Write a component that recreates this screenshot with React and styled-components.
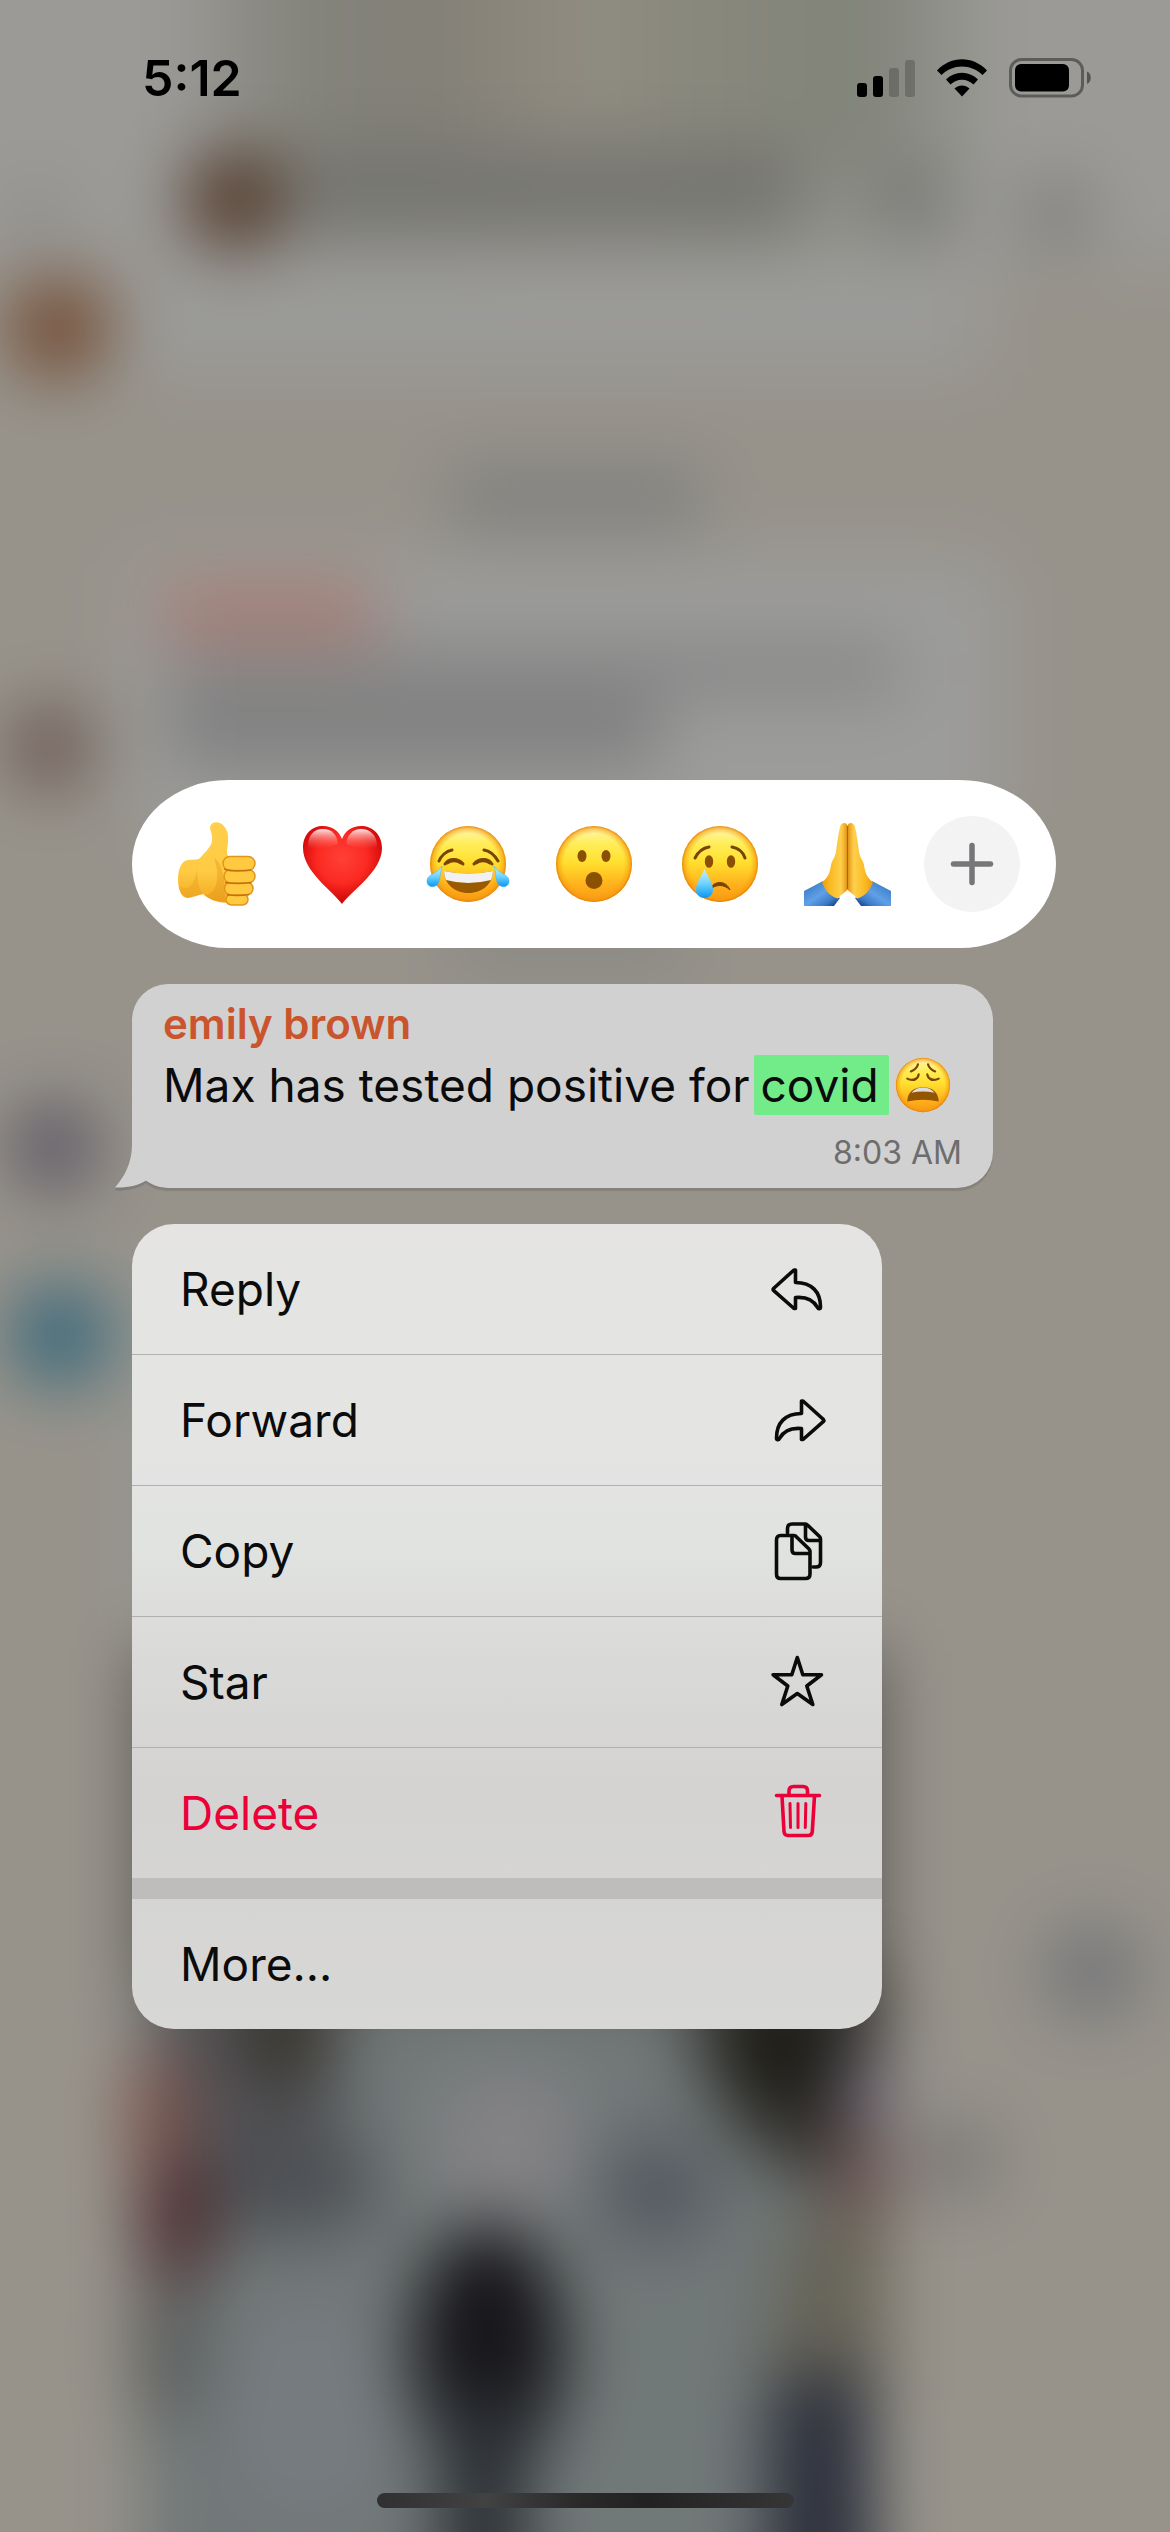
import React from "react";
import styled, { createGlobalStyle } from "styled-components";

const Global = createGlobalStyle`
  *, *::before, *::after { box-sizing: border-box; }
  body { margin: 0; background: #97938b; }
  button { font: inherit; color: inherit; border: 0; margin: 0; cursor: pointer; }
`;

const Screen = styled.div`
  position: relative;
  isolation: isolate;
  display: flex;
  flex-direction: column;
  min-height: 100vh;
  overflow: hidden;
  background: #97938b;
  color: #0b0b0b;
  font-family: Inter, "Liberation Sans", sans-serif;
`;

const Wallpaper = styled.svg`
  position: absolute;
  inset: 0;
  z-index: -1;
  width: 100%;
  height: 100%;
`;

const StatusBar = styled.header`
  display: flex;
  align-items: center;
  justify-content: space-between;
  height: 156px;
  padding: 0 79px 0 142px;
  color: #000;
`;

const Clock = styled.time`
  font-size: 50px;
  line-height: 60px;
  font-weight: 600;
`;

const StatusIcons = styled.div`
  display: flex;
  align-items: center;
  gap: 22px;
`;

const Overlay = styled.main`
  display: flex;
  flex-direction: column;
  align-items: flex-start;
  gap: 36px;
  padding: 624px 114px 36px 132px;
`;

const ReactionBar = styled.div`
  display: flex;
  align-items: center;
  gap: 42px;
  padding: 36px 36px 36px 42px;
  border-radius: 96px / 84px;
  background: #fff;
`;

const Reaction = styled.button`
  display: block;
  width: 84px;
  height: 84px;
  padding: 0;
  background: none;

  svg { display: block; overflow: visible; }
`;

const AddReaction = styled.button`
  display: grid;
  place-items: center;
  width: 96px;
  height: 96px;
  margin-left: -6px;
  padding: 0;
  border-radius: 50%;
  background: #f3f3f3;
  color: #757678;
`;

const Bubble = styled.article`
  position: relative;
  width: min(861px, 100%);
  padding: 10px 31px 15px;
  border-radius: 36px;
  background: #d1d1d1;
  box-shadow: 0 3px 1px rgba(0, 0, 0, 0.12);
`;

const Tail = styled.svg`
  position: absolute;
  left: -18px;
  bottom: -4px;
`;

const Sender = styled.h2`
  margin: 0;
  color: #c9542d;
  font-size: 42px;
  line-height: 60px;
  font-weight: 600;
`;

const Message = styled.p`
  display: flex;
  flex-wrap: wrap;
  align-items: center;
  gap: 4px;
  margin: 0;
  font-size: 46px;
  line-height: 62px;

  svg { display: block; }
`;

const Match = styled.mark`
  padding: 0 10px 0 7px;
  border-radius: 2px;
  background: #71ec89;
  color: inherit;
  line-height: 60px;
`;

const SentAt = styled.time`
  display: block;
  margin-top: 17px;
  color: #6d6d6d;
  font-size: 32px;
  line-height: 40px;
  text-align: right;
`;

const Menu = styled.div`
  width: min(750px, 100%);
  border-radius: 42px;
  overflow: hidden;
  background: linear-gradient(
    #e5e4e2 0%,
    #e4e4e3 25%,
    #e1e3e1 40%,
    #d9d9d7 55%,
    #d4d3d1 70%,
    #d7d7d6 100%
  );
`;

const MenuGroup = styled.div`
  border-bottom: ${(p) => (p.$last ? "0" : "21px solid #bebdbb")};
`;

const MenuItem = styled.button`
  display: flex;
  align-items: center;
  justify-content: space-between;
  width: 100%;
  height: 130px;
  padding: 0 55px 0 48px;
  background: none;
  color: ${(p) => (p.$danger ? "#eb0038" : "inherit")};
  font-size: 46px;
  line-height: 60px;
  text-align: left;

  & + & {
    height: 131px;
    border-top: 1px solid #b0b0ae;
  }
`;

const Home = styled.footer`
  display: flex;
  justify-content: center;
  margin-top: auto;
  padding-bottom: 24px;
`;

const HomeIndicator = styled.div`
  width: 417px;
  height: 15px;
  border-radius: 8px;
  background: linear-gradient(90deg, #303030, #424242 26%, #2a2a2a 48%, #222 65%, #363636);
`;

function Backdrop() {
  return (
    <Wallpaper viewBox="0 0 1170 2532" preserveAspectRatio="xMidYMin slice" aria-hidden="true">
      <defs>
        <filter id="soft" x="-200" y="-200" width="1570" height="2932" filterUnits="userSpaceOnUse" colorInterpolationFilters="sRGB">
          <feGaussianBlur stdDeviation="34" />
        </filter>
        <linearGradient id="header" x1="0" y1="0" x2="1" y2="0">
          <stop offset="0" stopColor="#9b9a97" />
          <stop offset=".14" stopColor="#85857d" />
          <stop offset=".3" stopColor="#827f76" />
          <stop offset=".5" stopColor="#908c81" />
          <stop offset=".68" stopColor="#87877c" />
          <stop offset=".84" stopColor="#818479" />
          <stop offset="1" stopColor="#9b9a97" />
        </linearGradient>
        <linearGradient id="headerFade" x1="0" y1="0" x2="0" y2="1">
          <stop offset=".7" stopColor="#9b9a97" stopOpacity="0" />
          <stop offset="1" stopColor="#9b9a97" />
        </linearGradient>
      </defs>
      <g filter="url(#soft)">
        <rect x="-200" y="-200" width="1570" height="2932" fill="#97938b" />
        <rect x="-200" y="-200" width="1570" height="460" fill="#9b9a97" />
        <rect x="170" y="-200" width="830" height="480" fill="url(#header)" />
        <rect x="170" y="-200" width="830" height="481" fill="url(#headerFade)" />
        <rect x="290" y="145" width="510" height="92" fill="#757570" />
        <circle cx="235" cy="200" r="50" fill="#523a2b" />
        <circle cx="915" cy="203" r="38" fill="#767674" />
        <circle cx="1057" cy="212" r="34" fill="#7b7b79" />
        <circle cx="36" cy="212" r="24" fill="#868684" />
        <rect x="130" y="275" width="850" height="95" fill="#9b9b99" />
        <circle cx="58" cy="328" r="50" fill="#734c34" />
        <rect x="445" y="465" width="260" height="64" rx="20" fill="#80807e" />
        <rect x="130" y="560" width="870" height="270" rx="30" fill="#9c9c9b" />
        <rect x="160" y="587" width="215" height="50" fill="#a9796f" />
        <rect x="170" y="645" width="730" height="50" fill="#858585" />
        <rect x="170" y="700" width="490" height="65" fill="#7e7e7e" />
        <circle cx="50" cy="747" r="44" fill="#6d5a55" />
        <rect x="450" y="925" width="240" height="40" fill="#858481" />
        <circle cx="54" cy="1147" r="46" fill="#5e5965" />
        <circle cx="60" cy="1335" r="52" fill="#3d6a7b" />
        <rect x="130" y="1270" width="700" height="350" fill="#949691" />

        <rect x="140" y="1650" width="740" height="1100" fill="#717878" />
        <rect x="140" y="1650" width="740" height="340" fill="#55534f" />
        <rect x="160" y="1990" width="180" height="220" fill="#525256" />
        <ellipse cx="285" cy="2020" rx="45" ry="75" fill="#38352e" />
        <ellipse cx="290" cy="2185" rx="90" ry="52" fill="#4d5054" />
        <path d="M690 1970H885V2190L790 2175C730 2130 690 2080 690 1970Z" fill="#32312d" />
        <ellipse cx="783" cy="2045" rx="55" ry="65" fill="#1d1c17" />
        <ellipse cx="868" cy="2100" rx="26" ry="55" fill="#6c6475" />
        <ellipse cx="862" cy="2180" rx="32" ry="46" fill="#6c504c" />
        <ellipse cx="160" cy="2120" rx="32" ry="75" fill="#7a524b" />
        <ellipse cx="178" cy="2225" rx="40" ry="66" fill="#4d2f32" />
        <rect x="432" y="2068" width="150" height="150" rx="50" fill="#838285" />
        <ellipse cx="656" cy="2190" rx="60" ry="54" fill="#545960" />
        <path d="M790 2215H885V2400H760Z" fill="#666357" />
        <ellipse cx="168" cy="2350" rx="32" ry="80" fill="#575959" />
        <ellipse cx="310" cy="2410" rx="90" ry="110" fill="#767b7f" />
        <ellipse cx="488" cy="2350" rx="76" ry="125" fill="#17161a" />
        <rect x="442" y="2390" width="84" height="300" fill="#292d32" />
        <path d="M770 2395Q815 2345 866 2385L878 2700H762Z" fill="#2c2f3b" />
        <circle cx="955" cy="2160" r="42" fill="#797876" />
        <circle cx="1092" cy="1972" r="50" fill="#757679" />
      </g>
    </Wallpaper>
  );
}

const SignalIcon = () => (
  <svg width="58" height="38" viewBox="0 0 58 38" role="img" aria-label="Signal, 2 of 4 bars">
    <rect x="0" y="24" width="10" height="14" rx="3" />
    <rect x="16" y="17" width="10" height="21" rx="3" />
    <rect x="32" y="9" width="10" height="29" rx="3" opacity=".2" />
    <rect x="48" y="1" width="10" height="37" rx="3" opacity=".2" />
  </svg>
);

const WifiIcon = () => (
  <svg width="50" height="38" viewBox="0 0 50 38" role="img" aria-label="Wi-Fi">
    <path d="M0 11.500C14-3.500 36-3.500 50 11.500L45.500 16C34 4.500 16 4.500 4.500 16Z" />
    <path d="M9 20.500C18 11.500 32 11.500 41 20.500L36.500 25.500C30 19 20 19 13.500 25.500Z" />
    <path d="M17.500 29.500C22 25.500 28 25.500 32.500 29.500L25 37.500Z" />
  </svg>
);

const BatteryIcon = () => (
  <svg width="82" height="40" viewBox="0 0 82 40" role="img" aria-label="Battery, 80%">
    <rect x="1.500" y="1.500" width="72" height="36.500" rx="11" fill="none" stroke="#000" strokeOpacity=".4" strokeWidth="3" />
    <rect x="6" y="6" width="54" height="27.500" rx="6" />
    <path d="M78 13.500C83 15.500 83 24 78 26Z" opacity=".45" />
  </svg>
);

const PaintDefs = styled.svg`
  position: absolute;
`;

function EmojiPaints() {
  return (
    <PaintDefs width="0" height="0" aria-hidden="true">
      <defs>
        <linearGradient id="faceFill" x1="0" y1="0" x2="0" y2="1">
          <stop offset="0" stopColor="#fff9bd" />
          <stop offset=".22" stopColor="#ffee5c" />
          <stop offset=".48" stopColor="#ffdf2e" />
          <stop offset=".78" stopColor="#ffb01c" />
          <stop offset="1" stopColor="#f99a14" />
        </linearGradient>
        <radialGradient id="faceRim" cx=".5" cy=".5" r=".5">
          <stop offset=".8" stopColor="#f59a0d" stopOpacity="0" />
          <stop offset=".93" stopColor="#f59a0d" stopOpacity=".55" />
          <stop offset="1" stopColor="#e27b08" stopOpacity=".9" />
        </radialGradient>
        <radialGradient id="heartFill" gradientUnits="userSpaceOnUse" cx="42" cy="36" r="50">
          <stop offset="0" stopColor="#ff4037" />
          <stop offset=".5" stopColor="#fb2a22" />
          <stop offset=".8" stopColor="#d90d0d" />
          <stop offset="1" stopColor="#b80505" />
        </radialGradient>
        <linearGradient id="gloss" x1="0" y1="0" x2="0" y2="1">
          <stop offset="0" stopColor="#fff" stopOpacity=".9" />
          <stop offset="1" stopColor="#ff6a60" stopOpacity="0" />
        </linearGradient>
        <linearGradient id="tear" x1="0" y1="0" x2="0" y2="1">
          <stop offset="0" stopColor="#c9f3ff" />
          <stop offset=".5" stopColor="#6fd3fd" />
          <stop offset="1" stopColor="#0b95f3" />
        </linearGradient>
        <linearGradient id="skin" x1="0" y1="0" x2="0" y2="1">
          <stop offset="0" stopColor="#ffcf4b" />
          <stop offset=".6" stopColor="#ffcb45" />
          <stop offset="1" stopColor="#f2a91f" />
        </linearGradient>
        <linearGradient id="palm" x1="0" y1="0" x2="1" y2="0">
          <stop offset="0" stopColor="#e99a12" />
          <stop offset=".3" stopColor="#f9b922" />
          <stop offset=".75" stopColor="#ffcf4c" />
          <stop offset="1" stopColor="#e29412" />
        </linearGradient>
        <linearGradient id="sleeve" x1="0" y1="0" x2="1" y2="1">
          <stop offset="0" stopColor="#2f6fb9" />
          <stop offset=".5" stopColor="#60a0e6" />
          <stop offset=".75" stopColor="#3b7ccb" />
          <stop offset="1" stopColor="#0b2b66" />
        </linearGradient>
      </defs>
    </PaintDefs>
  );
}

const Face = ({ size = 84, children, ...rest }) => (
  <svg width={size} height={size} viewBox="0 0 84 84" {...rest}>
    <circle cx="42" cy="42" r="38" fill="url(#faceFill)" />
    <circle cx="42" cy="42" r="38" fill="url(#faceRim)" />
    {children}
  </svg>
);

const Line = (props) => (
  <path fill="none" stroke="#7a4203" strokeWidth="3" strokeLinecap="round" {...props} />
);

const ThumbsUp = () => (
  <svg width="84" height="84" viewBox="0 0 84 84">
    <path
      d="M14 38C20 37 24 39 27 35C32 29 37 25 38 19C39 13 36 9 36 5C37 1 41-1 46 1C52 4 55 11 54 19C54 25 52 29 54 34L60 44L58 80C50 82 38 80 29 72L14 76C7 76 4 67 4 57C4 47 8 38 14 38Z"
      fill="url(#skin)"
    />
    <path d="M24 40C22 50 23 64 29 72C24 73 18 76 14 76C9 75 6 70 5 64C14 70 22 64 24 40Z" fill="#e89f22" opacity=".45" />
    <path d="M40 36C50 42 51 60 51 80C45 80 36 78 31 73C44 72 46 52 40 36Z" fill="#dc8b14" opacity=".35" />
    <g fill="#ffc940" stroke="#e3951b" strokeWidth="1.500">
      <rect x="52" y="72" width="22" height="11" rx="5.500" />
      <rect x="50.500" y="60" width="28.500" height="13" rx="6.500" />
      <rect x="50" y="47.500" width="31" height="13.500" rx="6.700" />
      <rect x="49" y="34.500" width="32" height="14" rx="7" />
    </g>
    <path d="M50 47C57 50 68 49 77 48M51 60.500C60 62 70 61.500 77 60.500M53 72.500C60 74 68 73.500 75 72.500" fill="none" stroke="#b9660c" strokeWidth="1.500" opacity=".8" />
  </svg>
);

const Heart = () => (
  <svg width="84" height="84" viewBox="0 0 84 84">
    <path d="M42 82C34 70 3 50 3 26C3 12 12 4 23 4C32 4 39 9 42 17C45 9 52 4 61 4C72 4 82 12 82 26C82 50 50 70 42 82Z" fill="url(#heartFill)" />
    <path d="M8 24C8 13 14 7 23 7C32 7 37 13 38 22C28 26 14 30 8 24Z" fill="url(#gloss)" />
    <path d="M77 24C77 13 70 7 61 7C53 7 47 13 46 22C56 26 71 30 77 24Z" fill="url(#gloss)" />
  </svg>
);

const Joy = () => (
  <Face>
    <Line d="M13 39C15 34 20 29 26 28" />
    <Line d="M58 28C65 29 69 34 72 39" />
    <Line d="M19 42C23 36 32 36 37 42M21 41C25 38 31 38 35 41" />
    <Line d="M48 42C53 36 62 36 66 42M50 41C54 38 60 38 64 41" />
    <path d="M18 49Q42 54 67 49C67 61 57 71 42.500 71C28 71 18 61 18 49Z" fill="#9b5a00" />
    <path d="M18 49Q42 54 67 49Q67 54 65 58Q42 64 20 58Q18 54 18 49Z" fill="#f1f1f3" />
    <path d="M16 44C14 50 15 56 12 62C8 67 0 65 1 58C2 52 12 51 16 44Z" fill="url(#tear)" stroke="#3fb4f4" strokeWidth=".5" />
    <path d="M68 44C70 50 69 56 72 62C76 67 84 65 83 58C82 52 72 51 68 44Z" fill="url(#tear)" stroke="#3fb4f4" strokeWidth=".5" />
  </Face>
);

const Wow = () => (
  <Face>
    <ellipse cx="30" cy="34" rx="4.500" ry="6" fill="#8a4f04" />
    <ellipse cx="54" cy="34" rx="4.500" ry="6" fill="#8a4f04" />
    <circle cx="42" cy="58.500" r="8.500" fill="#8a5200" />
  </Face>
);

const Crying = () => (
  <Face>
    <Line d="M17 36C20 30 25 26 31 25" />
    <Line d="M54 25C60 26 65 30 67 36" />
    <ellipse cx="31" cy="39.500" rx="4.200" ry="6.300" fill="#8a4f04" />
    <ellipse cx="53" cy="39.500" rx="4.200" ry="6.300" fill="#8a4f04" />
    <path d="M31 68C36 58 48 58 52 68C46 62 38 62 31 68Z" fill="#7a4203" stroke="#7a4203" strokeLinejoin="round" />
    <path d="M26.500 47C29 54 35 60 35 67.500C35 73 31 76 26.500 76C22 76 18 73 18 67.500C18 60 24 54 26.500 47Z" fill="url(#tear)" />
  </Face>
);

const Hand = (props) => (
  <g {...props}>
    <path d="M0 69L19 59C22 66 28 73 36 76L30 84H0Z" fill="url(#sleeve)" />
    <path
      d="M43.500 4V68L36 74C35 76 34 77 32 76C25 73 20 67 18 60C24 56 26 50 27 43C28 38 31 36 32 30C33 22 34 14 36 5C37 0 43 0 43.500 4Z"
      fill="url(#palm)"
    />
  </g>
);

const Pray = () => (
  <svg width="84" height="84" viewBox="0 0 84 84">
    <Hand />
    <Hand transform="translate(87 0) scale(-1 1)" />
    <path d="M43.500 4V67" stroke="#b3640a" strokeWidth="1.200" />
  </svg>
);

const Weary = () => (
  <Face size={60} role="img" aria-label="weary face">
    <Line d="M25 23C30 21 34 17 35 13" />
    <Line d="M49 13C50 17 54 21 59 23" />
    <Line d="M20 33C27 37 35 34 36 27M22 34C28 36 33 34 35 30" />
    <Line d="M64 33C57 37 49 34 48 27M62 34C56 36 51 34 49 30" />
    <path d="M20 65C20 52 29 45 42 45C55 45 64 52 64 65Q42 60 20 65Z" fill="#935500" />
    <path d="M26 53C33 43 51 43 58 53Q42 49 26 53Z" fill="#dcdcdc" />
  </Face>
);

const Icon = ({ children }) => (
  <svg width="60" height="60" viewBox="0 0 60 60" fill="none" stroke="currentColor" strokeWidth="3.600" strokeLinecap="round" strokeLinejoin="round" aria-hidden="true">
    {children}
  </svg>
);

const arrow =
  "M27 11L6.500 29.500Q5.800 30.400 6.500 31.300L27 49.500H28.500V38.500C40 37.500 46.500 41 50.500 48.500C51.500 50.500 53.500 50 53.500 48C53.500 33 45 23.500 28.500 23.500V11Z";

const ReplyIcon = () => (
  <Icon><path d={arrow} /></Icon>
);
const ForwardIcon = () => (
  <Icon><path d={arrow} transform="translate(63 0) scale(-1 1)" /></Icon>
);
const CopyIcon = () => (
  <Icon>
    <path d="M27 14.500H13.500Q9.500 14.500 9.500 19V53Q9.500 57.500 13.500 57.500H38.500Q43 57.500 43 53V30Q42.500 28.500 41.500 27.500L29.500 16Q28.500 14.500 27 14.500ZM25 15V29Q25 32.500 28.500 32.500H42.500" />
    <path d="M20.500 12V7.500Q20.500 3 25 3H38.500Q39.500 3 41 4.500L52.500 15.500Q53.500 16.500 53.500 18V41.500Q53.500 46 49 46H46M38.500 3.500V16Q38.500 19.500 42 19.500H53" />
  </Icon>
);
const StarIcon = () => (
  <Icon>
    <path d="M30.300 5.500L35.800 22.700H54.500L39.800 34L45.800 52.500L30.300 41.500L14.800 52.500L20.800 34L6.100 22.700H24.800Z" />
  </Icon>
);
const TrashIcon = () => (
  <Icon>
    <path d="M9.500 12.500H52.500M22 12V8Q22 3.500 26.500 3.500H36Q40.500 3.500 40.500 8V12M15 13L17 48.500Q17.300 52.500 21 52.500H41.500Q45 52.500 45.300 48.500L47.500 13" />
    <path d="M23 20.500L23.500 44.500M31 20.500V44.500M38.800 20.500L38.300 44.500" strokeWidth="3" />
  </Icon>
);

const reactions = [
  ["Thumbs up", ThumbsUp],
  ["Heart", Heart],
  ["Tears of joy", Joy],
  ["Surprised", Wow],
  ["Crying", Crying],
  ["Folded hands", Pray],
];

const actions = [
  { label: "Reply", Glyph: ReplyIcon },
  { label: "Forward", Glyph: ForwardIcon },
  { label: "Copy", Glyph: CopyIcon },
  { label: "Star", Glyph: StarIcon },
  { label: "Delete", Glyph: TrashIcon, danger: true },
];

export default function App() {
  return (
    <Screen>
      <Global />
      <Backdrop />
      <EmojiPaints />
      <StatusBar>
        <Clock>5:12</Clock>
        <StatusIcons>
          <SignalIcon />
          <WifiIcon />
          <BatteryIcon />
        </StatusIcons>
      </StatusBar>
      <Overlay>
        <ReactionBar>
          {reactions.map(([name, Emoji]) => (
            <Reaction key={name} type="button" aria-label={name}>
              <Emoji />
            </Reaction>
          ))}
          <AddReaction type="button" aria-label="More reactions">
            <svg width="44" height="44" viewBox="0 0 44 44" stroke="currentColor" strokeWidth="5.500" strokeLinecap="round">
              <path d="M3.500 22H40.500M22 3.500V40.500" />
            </svg>
          </AddReaction>
        </ReactionBar>
        <Bubble>
          <Tail width="52" height="48" viewBox="0 0 52 48" aria-hidden="true">
            <path d="M1 43.500L2 46.500C14 47 25 44 31 40V36L18 38Z" fill="rgba(0,0,0,.12)" />
            <path d="M18 0C18 20 10 33 1 43.500C14 44 25 41 31.500 37L52 28V0Z" fill="#d1d1d1" />
          </Tail>
          <Sender>emily brown</Sender>
          <Message>
            <span>Max has tested positive for</span>
            <Match>covid</Match>
            <Weary />
          </Message>
          <SentAt>8:03 AM</SentAt>
        </Bubble>
        <Menu>
          <MenuGroup>
            {actions.map(({ label, Glyph, danger }) => (
              <MenuItem key={label} type="button" $danger={danger}>
                {label}
                <Glyph />
              </MenuItem>
            ))}
          </MenuGroup>
          <MenuGroup $last>
            <MenuItem type="button">More...</MenuItem>
          </MenuGroup>
        </Menu>
      </Overlay>
      <Home>
        <HomeIndicator />
      </Home>
    </Screen>
  );
}
